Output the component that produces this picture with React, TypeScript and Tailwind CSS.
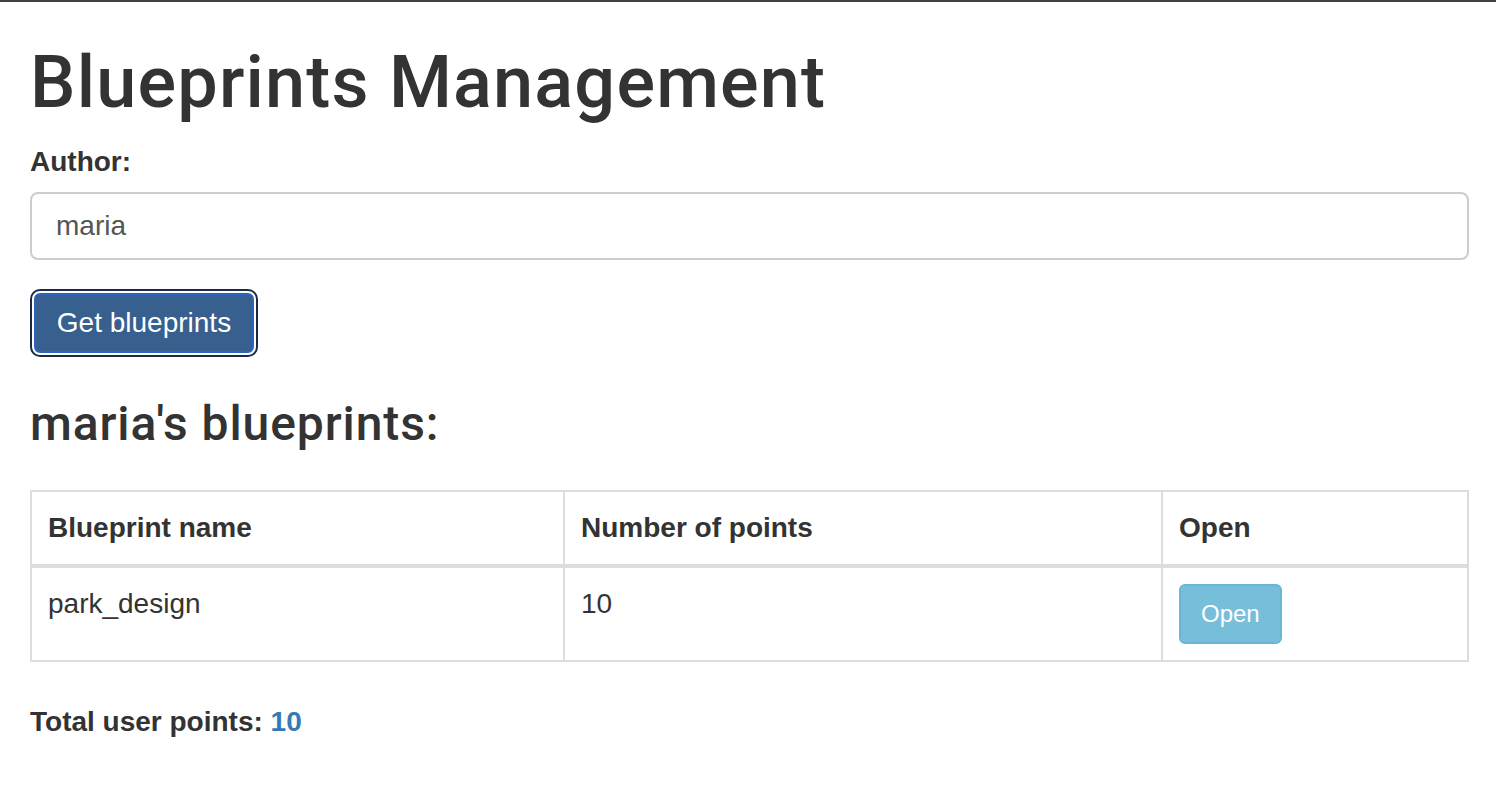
import { useState } from 'react'

interface Blueprint {
  name: string
  points: number
}

const blueprints: Blueprint[] = [{ name: 'park_design', points: 10 }]

export default function App() {
  const [author, setAuthor] = useState('maria')
  const total = blueprints.reduce((acc, bp) => acc + bp.points, 0)

  return (
    <div
      className="min-h-screen bg-white border-t-2 border-[#404040] text-[#333333]"
      style={{ fontFamily: '"Liberation Sans", Arial, sans-serif' }}
    >
      <div className="pl-[30px] pr-[27px]">
        <h1 className="mt-[41px] font-['Roboto',sans-serif] text-[72px] leading-[79px] font-medium tracking-[1.2px]">
          Blueprints Management
        </h1>

        <div className="mt-[20px]">
          <label className="block text-[28px] leading-[40px] font-bold">Author:</label>
          <input
            value={author}
            onChange={(e) => setAuthor(e.target.value)}
            className="mt-[10px] block w-full h-[68px] px-[24px] border-2 border-[#cccccc] rounded-[8px] text-[28px] text-[#555555] outline-none"
          />
        </div>

        <button className="mt-[29px] block w-[228px] h-[68px] border-2 border-[#1c2b40] rounded-[10px] p-[2px] bg-white">
          <span className="flex items-center justify-center h-full border-2 border-[#2a64c8] rounded-[6px] bg-[#37608f] text-white text-[28px] leading-[40px]">
            Get blueprints
          </span>
        </button>

        <h3 className="mt-[40px] font-['Roboto',sans-serif] text-[48px] leading-[53px] font-medium tracking-[0.9px]">
          {author}'s blueprints:
        </h3>

        <table className="mt-[40px] w-full border-collapse border-2 border-[#dddddd] text-[28px] leading-[40px]">
          <thead>
            <tr>
              <th className="w-[533px] p-[16px] text-left font-bold border-2 border-b-4 border-[#dddddd]">
                Blueprint name
              </th>
              <th className="w-[598px] p-[16px] text-left font-bold border-2 border-b-4 border-[#dddddd]">
                Number of points
              </th>
              <th className="p-[16px] text-left font-bold border-2 border-b-4 border-[#dddddd]">Open</th>
            </tr>
          </thead>
          <tbody>
            {blueprints.map((bp) => (
              <tr key={bp.name}>
                <td className="p-[16px] align-top border-2 border-[#dddddd]">{bp.name}</td>
                <td className="p-[16px] align-top border-2 border-[#dddddd]">{bp.points}</td>
                <td className="p-[16px] align-top border-2 border-[#dddddd]">
                  <button className="block h-[60px] px-[20px] rounded-[6px] border-2 border-[#69b6d6] bg-[#77bedb] text-white text-[24px] leading-[36px]">
                    Open
                  </button>
                </td>
              </tr>
            ))}
          </tbody>
        </table>

        <p className="mt-[40px] text-[28px] leading-[40px] font-bold">
          Total user points: <span className="text-[#337ab7]">{total}</span>
        </p>
      </div>
    </div>
  )
}
